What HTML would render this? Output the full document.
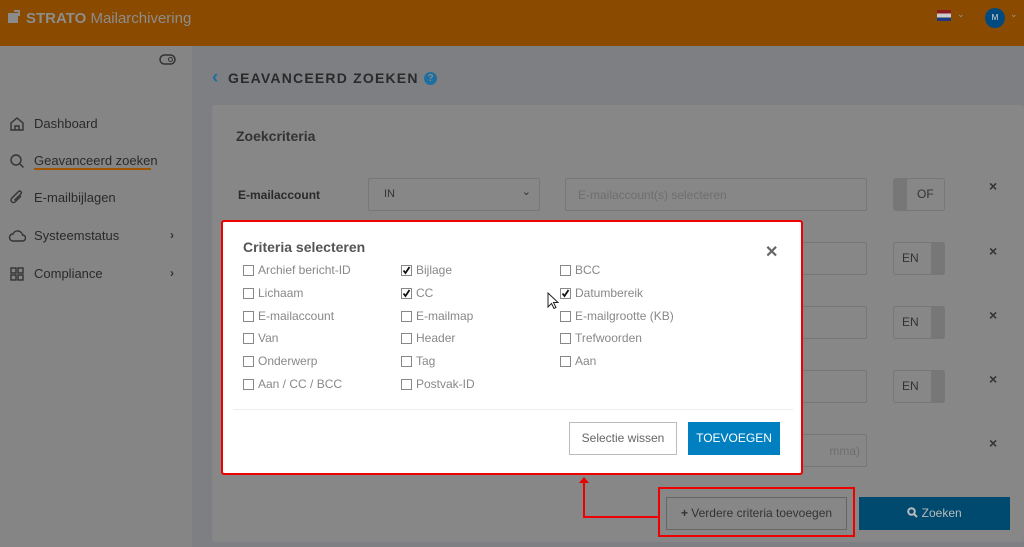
<!DOCTYPE html>
<html><head><meta charset="utf-8"><style>
*{box-sizing:border-box;margin:0;padding:0}
body{width:1024px;height:547px;overflow:hidden;background:#7e7f82;font-family:"Liberation Sans",sans-serif;position:relative}
.a{position:absolute}
.hdr{left:0;top:0;width:1024px;height:46px;background:#8a4a00}
.side{left:0;top:46px;width:192px;height:501px;background:#858585}
.nav{left:34px;font-size:13px;color:#2a2a2a}
.card{left:212px;top:105px;width:812px;height:437px;background:#878787;border-radius:3px}
.fld{border:1px solid #777;border-radius:2px;height:33px}
.tog{width:52px;height:33px;border:1px solid #777;border-radius:3px;font-size:12px;color:#333;line-height:31px}
.x{font-size:14px;color:#333;font-weight:bold;left:989px}
.dlg{left:221px;top:220px;width:582px;height:255px;background:#fff;border:2px solid #e00;border-radius:3px}
.cb{font-size:12px;color:#888;white-space:nowrap;line-height:14px}
.cb svg{display:inline-block;vertical-align:-2px;margin-right:4px}
</style></head><body>
<div class="a hdr"></div>
<div class="a" style="left:8px;top:13px;width:10px;height:10px;background:#8b8b8b"></div>
<div class="a" style="left:14px;top:10px;width:6px;height:6px;border-top:2px solid #8b8b8b;border-right:2px solid #8b8b8b"></div>
<div class="a" style="left:26px;top:10px;font-size:15px;color:#8d8d8d;font-weight:bold">STRATO <span style="font-weight:normal">Mailarchivering</span></div>
<div class="a" style="left:937px;top:10px;width:14px;height:11px;background:linear-gradient(#8a1d1d 33%,#ccc 33% 66%,#1f3a7a 66%)"></div>
<div class="a" style="left:957px;top:9px;font-size:9px;color:#999">⌄</div>
<div class="a" style="left:985px;top:8px;width:20px;height:20px;border-radius:50%;background:#004a80;color:#ddd;font-size:8px;text-align:center;line-height:20px">M</div>
<div class="a" style="left:1010px;top:9px;font-size:9px;color:#999">⌄</div>
<div class="a side"></div>
<svg class="a" style="left:159px;top:54px" width="18" height="12"><rect x="1" y="1" width="15" height="9" rx="4.5" fill="none" stroke="#333" stroke-width="1.5"/><circle cx="11.5" cy="5.5" r="2" fill="none" stroke="#333"/></svg>
<svg class="a" style="left:9px;top:116px" width="16" height="16" fill="none" stroke="#333" stroke-width="1.4"><path d="M2 7L8 2l6 5v7H2z M6 14v-4h4v4"/></svg>
<div class="a nav" style="top:116px">Dashboard</div>
<svg class="a" style="left:9px;top:153px" width="16" height="16" fill="none" stroke="#333" stroke-width="1.4"><circle cx="7" cy="7" r="5"/><path d="M11 11l3.5 3.5"/></svg>
<div class="a nav" style="top:153px">Geavanceerd zoeken</div>
<div class="a" style="left:34px;top:168px;width:117px;height:2px;background:#a05500"></div>
<svg class="a" style="left:9px;top:190px" width="16" height="16" fill="none" stroke="#333" stroke-width="1.4"><path d="M12 6l-6 6a2.5 2.5 0 01-3.5-3.5l7-7a1.7 1.7 0 012.4 2.4l-6.5 6.5"/></svg>
<div class="a nav" style="top:190px">E-mailbijlagen</div>
<svg class="a" style="left:8px;top:228px" width="18" height="16" fill="none" stroke="#333" stroke-width="1.4"><path d="M5 13a3.5 3.5 0 010-7a5 5 0 019.5 1a3 3 0 010 6z"/></svg>
<div class="a nav" style="top:228px">Systeemstatus</div>
<div class="a" style="left:170px;top:228px;font-size:12px;color:#333;font-weight:bold">›</div>
<svg class="a" style="left:9px;top:266px" width="16" height="16" fill="none" stroke="#333" stroke-width="1.4"><rect x="2" y="2" width="5" height="5"/><rect x="9" y="2" width="5" height="5"/><rect x="2" y="9" width="5" height="5"/><rect x="9" y="9" width="5" height="5"/></svg>
<div class="a nav" style="top:266px">Compliance</div>
<div class="a" style="left:170px;top:266px;font-size:12px;color:#333;font-weight:bold">›</div>
<div class="a" style="left:212px;top:67px;font-size:19px;color:#1d6fa0;font-weight:bold">‹</div>
<div class="a" style="left:228px;top:70px;font-size:14px;font-weight:bold;color:#2a2a2a;letter-spacing:1.2px">GEAVANCEERD ZOEKEN</div>
<div class="a" style="left:424px;top:72px;width:13px;height:13px;border-radius:50%;background:#1d6fa0;color:#888;font-size:10px;font-weight:bold;text-align:center;line-height:13px">?</div>
<div class="a card"></div>
<div class="a" style="left:236px;top:128px;font-size:14px;font-weight:bold;color:#333">Zoekcriteria</div>
<div class="a" style="left:238px;top:188px;font-size:12px;font-weight:bold;color:#2a2a2a">E-mailaccount</div>
<div class="a fld" style="left:368px;top:178px;width:172px;padding:9px 15px;font-size:11px;color:#333">IN<span style="position:absolute;right:8px;top:6px">⌄</span></div>
<div class="a fld" style="left:565px;top:178px;width:302px;padding:9px 12px;font-size:12px;color:#6e6e6e">E-mailaccount(s) selecteren</div>
<div class="a tog" style="left:893px;top:178px;border-left:14px solid #777;padding-left:10px">OF</div>
<div class="a x" style="top:178px">×</div>
<div class="a fld" style="left:800px;top:242px;width:67px"></div>
<div class="a tog" style="left:893px;top:242px;border-right:14px solid #777;padding-left:8px">EN</div><div class="a x" style="top:243px">×</div>
<div class="a fld" style="left:800px;top:306px;width:67px"></div>
<div class="a tog" style="left:893px;top:306px;border-right:14px solid #777;padding-left:8px">EN</div><div class="a x" style="top:307px">×</div>
<div class="a fld" style="left:800px;top:370px;width:67px"></div>
<div class="a tog" style="left:893px;top:370px;border-right:14px solid #777;padding-left:8px">EN</div><div class="a x" style="top:371px">×</div>
<div class="a fld" style="left:800px;top:434px;width:67px;padding:9px 6px;font-size:12px;color:#6e6e6e;text-align:right">mma)</div>
<div class="a x" style="top:435px">×</div>
<div class="a" style="left:658px;top:487px;width:197px;height:50px;border:2px solid #e00"></div>
<div class="a" style="left:666px;top:497px;width:181px;height:33px;border:1px solid #666;font-size:12px;color:#333;text-align:center;line-height:31px"><b>+</b> Verdere criteria toevoegen</div>
<div class="a" style="left:859px;top:497px;width:151px;height:33px;background:#004a70;font-size:12px;color:#bbb;text-align:center;line-height:33px"><svg width="11" height="11" style="vertical-align:-1px" fill="none" stroke="#bbb" stroke-width="2"><circle cx="4.5" cy="4.5" r="3.3"/><path d="M7 7l3 3"/></svg> Zoeken</div>
<div class="a" style="left:583px;top:482px;width:2px;height:36px;background:#e00"></div>
<div class="a" style="left:583px;top:516px;width:76px;height:2px;background:#e00"></div>
<div class="a" style="left:579px;top:477px;width:0;height:0;border-left:5px solid transparent;border-right:5px solid transparent;border-bottom:6px solid #e00"></div>
<div class="a dlg"></div>
<div class="a" style="left:243px;top:239px;font-size:14px;font-weight:bold;color:#555">Criteria selecteren</div>
<div class="a" style="left:765px;top:242px;font-size:16px;font-weight:bold;color:#666">✕</div>
<svg width="0" height="0" style="position:absolute"><defs>
<symbol id="u" viewBox="0 0 11 11"><rect x=".5" y=".5" width="10" height="10" fill="#fff" stroke="#888"/></symbol>
<symbol id="c" viewBox="0 0 11 11"><rect x=".5" y=".5" width="10" height="10" fill="#fff" stroke="#888"/><path d="M2.5 5.5l2 2.5 4-6" fill="none" stroke="#111" stroke-width="1.8"/></symbol>
</defs></svg>
<div class="a cb" style="left:243px;top:263px"><svg width="11" height="11"><use href="#u"/></svg>Archief bericht-ID</div>
<div class="a cb" style="left:243px;top:286px"><svg width="11" height="11"><use href="#u"/></svg>Lichaam</div>
<div class="a cb" style="left:243px;top:309px"><svg width="11" height="11"><use href="#u"/></svg>E-mailaccount</div>
<div class="a cb" style="left:243px;top:331px"><svg width="11" height="11"><use href="#u"/></svg>Van</div>
<div class="a cb" style="left:243px;top:354px"><svg width="11" height="11"><use href="#u"/></svg>Onderwerp</div>
<div class="a cb" style="left:243px;top:377px"><svg width="11" height="11"><use href="#u"/></svg>Aan / CC / BCC</div>
<div class="a cb" style="left:401px;top:263px"><svg width="11" height="11"><use href="#c"/></svg>Bijlage</div>
<div class="a cb" style="left:401px;top:286px"><svg width="11" height="11"><use href="#c"/></svg>CC</div>
<div class="a cb" style="left:401px;top:309px"><svg width="11" height="11"><use href="#u"/></svg>E-mailmap</div>
<div class="a cb" style="left:401px;top:331px"><svg width="11" height="11"><use href="#u"/></svg>Header</div>
<div class="a cb" style="left:401px;top:354px"><svg width="11" height="11"><use href="#u"/></svg>Tag</div>
<div class="a cb" style="left:401px;top:377px"><svg width="11" height="11"><use href="#u"/></svg>Postvak-ID</div>
<div class="a cb" style="left:560px;top:263px"><svg width="11" height="11"><use href="#u"/></svg>BCC</div>
<div class="a cb" style="left:560px;top:286px"><svg width="11" height="11"><use href="#c"/></svg>Datumbereik</div>
<div class="a cb" style="left:560px;top:309px"><svg width="11" height="11"><use href="#u"/></svg>E-mailgrootte (KB)</div>
<div class="a cb" style="left:560px;top:331px"><svg width="11" height="11"><use href="#u"/></svg>Trefwoorden</div>
<div class="a cb" style="left:560px;top:354px"><svg width="11" height="11"><use href="#u"/></svg>Aan</div>
<svg class="a" style="left:547px;top:292px" width="12" height="18"><path d="M1 1v14l3.5-3.5 2.5 5 2-1-2.5-5H11z" fill="#fff" stroke="#222"/></svg>
<div class="a" style="left:233px;top:409px;width:560px;height:1px;background:#eee"></div>
<div class="a" style="left:569px;top:422px;width:108px;height:33px;border:1px solid #bbb;font-size:12px;color:#666;text-align:center;line-height:31px">Selectie wissen</div>
<div class="a" style="left:688px;top:422px;width:92px;height:33px;background:#0080c0;font-size:12px;color:#fff;text-align:center;line-height:33px">TOEVOEGEN</div>
</body></html>
